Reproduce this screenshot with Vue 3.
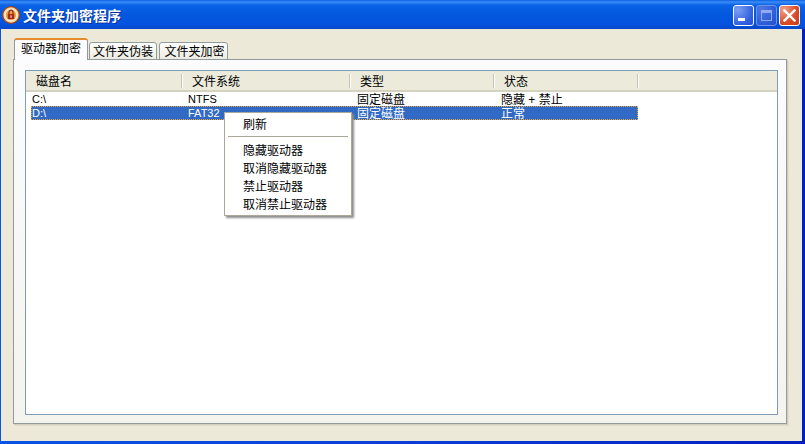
<script setup>
const columns = [
  { name: '磁盘名', width: 157 },
  { name: '文件系统', width: 168 },
  { name: '类型', width: 144 },
  { name: '状态', width: 144 },
]
const rows = [
  { cells: ['C:\\', 'NTFS', '固定磁盘', '隐藏 + 禁止'], selected: false },
  { cells: ['D:\\', 'FAT32', '固定磁盘', '正常'], selected: true },
]
const tabs = ['驱动器加密', '文件夹伪装', '文件夹加密']
const menuTop = ['刷新']
const menuBottom = ['隐藏驱动器', '取消隐藏驱动器', '禁止驱动器', '取消禁止驱动器']
// Rows begin 5px inside the list, so the first cell is narrower than its header.
const cellWidth = (i) => columns[i].width - (i === 0 ? 4 : 0)
</script>

<template>
  <div class="window">
    <header class="titlebar">
      <svg class="app-icon" width="18" height="18" viewBox="0 0 18 18">
        <circle cx="9" cy="9" r="8.3" fill="#f3d6a4" stroke="#a8420f" stroke-width="1.3" />
        <circle cx="9" cy="9" r="5.8" fill="#e9a04a" stroke="#fbf0d6" stroke-width="1.2" />
        <path d="M7 8V6.2a2 2 0 0 1 4 0V8" fill="none" stroke="#8e2412" stroke-width="1.2" />
        <rect x="5.8" y="8" width="6.4" height="5" fill="#a82a16" />
        <rect x="8.4" y="9.4" width="1.2" height="2.2" fill="#fbe8c8" />
      </svg>
      <span class="title">文件夹加密程序</span>
      <div class="controls">
        <button class="ctl ctl-min"><i class="min-glyph"></i></button>
        <button class="ctl ctl-max"><i class="max-glyph"></i></button>
        <button class="ctl ctl-close">
          <svg width="13" height="13" viewBox="0 0 13 13">
            <path d="M1.5 1.5 11.5 11.5M11.5 1.5 1.5 11.5" stroke="#fff" stroke-width="2.4" stroke-linecap="square" />
          </svg>
        </button>
      </div>
    </header>

    <main class="client">
      <nav class="tabs">
        <div
          v-for="(tab, i) in tabs"
          :key="tab"
          class="tab"
          :class="{ active: i === 0 }"
        >{{ tab }}</div>
      </nav>
      <section class="panel">
        <div class="list">
          <div class="list-head">
            <div
              v-for="col in columns"
              :key="col.name"
              class="head-cell"
              :style="{ width: col.width + 'px' }"
            >{{ col.name }}</div>
          </div>
          <div
            v-for="row in rows"
            :key="row.cells[0]"
            class="row"
            :class="{ selected: row.selected }"
          >
            <div
              v-for="(cell, i) in row.cells"
              :key="i"
              class="cell"
              :class="{ latin: i < 2 }"
              :style="{ width: cellWidth(i) + 'px' }"
            >{{ cell }}</div>
          </div>

          <div class="menu">
            <div v-for="item in menuTop" :key="item" class="menu-item">{{ item }}</div>
            <div class="menu-sep"></div>
            <div v-for="item in menuBottom" :key="item" class="menu-item">{{ item }}</div>
          </div>
        </div>
      </section>
    </main>
  </div>
</template>

<style>
html, body { margin: 0; padding: 0; overflow: hidden; }
</style>

<style scoped>
.window {
  width: 805px;
  height: 444px;
  box-sizing: border-box;
  display: flex;
  flex-direction: column;
  background: linear-gradient(90deg, #0a55e4 0, #0a3fd8 50%, #0020c0 100%);
  font-family: "Liberation Sans", "Noto Sans CJK SC", sans-serif;
  font-size: 12px;
  color: #000;
  overflow: hidden;
}
.titlebar {
  height: 29px;
  flex: none;
  display: flex;
  align-items: center;
  padding: 0 5px 0 2px;
  box-sizing: border-box;
  background: linear-gradient(180deg, #0a5fe0 0, #3c8cf6 2px, #0a63e6 5px, #0358de 14px, #0553e0 24px, #0a47c8 29px);
}
.app-icon { flex: none; margin-top: 1px; }
.title {
  margin-left: 3px;
  margin-top: 1px;
  color: #fff;
  font-size: 14px;
  font-weight: 700;
  font-family: "Noto Sans CJK SC", sans-serif;
  text-shadow: 1px 1px 0 #0a2f9c;
  line-height: 18px;
}
.controls {
  margin-left: auto;
  margin-top: 2px;
  display: flex;
  gap: 2px;
}
.ctl {
  width: 21px;
  height: 21px;
  padding: 0;
  box-sizing: border-box;
  border: 1px solid #fff;
  border-radius: 3px;
  position: relative;
  display: flex;
  align-items: center;
  justify-content: center;
}
.ctl-min { background: radial-gradient(circle at 20% 20%, #7da0f2, #2f5fe0 70%, #2350cf); }
.ctl-max {
  background: radial-gradient(circle at 20% 20%, #4e78e2, #2b5bd8 70%, #2850c8);
  border-color: #6f93e8;
}
.ctl-close { background: radial-gradient(circle at 20% 20%, #f0a088, #db4c24 60%, #c8391a); }
.min-glyph {
  position: absolute;
  left: 4px;
  bottom: 4px;
  width: 7px;
  height: 3px;
  background: #fff;
}
.max-glyph {
  width: 11px;
  height: 11px;
  box-sizing: border-box;
  border: 1px solid #8fabef;
  border-top-width: 3px;
}
.client {
  flex: 1;
  min-height: 0;
  margin: 0 3px 3px 1px;
  padding: 10px 15px 17px 12px;
  background: #ece9d8;
  display: flex;
  flex-direction: column;
  box-sizing: border-box;
}
.tabs {
  display: flex;
  align-items: flex-end;
  height: 21px;
  padding-left: 1px;
  gap: 2px;
  position: relative;
  z-index: 1;
  margin-bottom: -1px;
}
.tab {
  width: 68px;
  height: 18px;
  box-sizing: border-box;
  padding-top: 1px;
  text-align: center;
  line-height: 16px;
  background: linear-gradient(180deg, #fff, #ecebe2);
  border: 1px solid #919b9c;
  border-bottom: 1px solid #919b9c;
  border-radius: 3px 3px 0 0;
}
.tab:last-child {
  width: 69px;
  padding-left: 2px;
}
.tab.active {
  width: 74px;
  height: 22px;
  padding-top: 2px;
  margin-right: -1px;
  background: #fcfcfe;
  border-top: 2px solid #e68b2c;
  border-bottom: none;
  line-height: 15px;
  text-align: center;
}
.panel {
  flex: 1;
  min-height: 0;
  border: 1px solid #919b9c;
  background: linear-gradient(180deg, #fcfcfe, #f4f3ee);
  box-shadow: 1px 1px 0 #d2cfbc, 2px 2px 0 #e0ddca;
  padding: 10px 8px 8px 11px;
}
.list {
  height: 100%;
  box-sizing: border-box;
  border: 1px solid #7f9db9;
  background: #fff;
  position: relative;
}
.list-head {
  display: flex;
  height: 21px;
  box-sizing: border-box;
  background: #ebeadb;
  border-bottom: 2px solid #d6d2c2;
}
.head-cell {
  flex: none;
  box-sizing: border-box;
  padding-left: 9px;
  line-height: 22px;
  position: relative;
}
.head-cell:first-child { padding-left: 10px; }
.head-cell::after {
  content: "";
  position: absolute;
  right: 0;
  top: 3px;
  height: 14px;
  width: 2px;
  background: linear-gradient(90deg, #c7c5b2 50%, #fff 50%);
}
.row {
  display: flex;
  width: 607px;
  height: 14px;
  margin-left: 5px;
  box-sizing: border-box;
}
.row.selected {
  background: #316ac5;
  color: #fff;
  outline: 1px dotted #e8a33c;
  outline-offset: -1px;
}
.cell {
  flex: none;
  box-sizing: border-box;
  padding-left: 5px;
  line-height: 17px;
  white-space: nowrap;
}
.cell:first-child { padding-left: 1px; }
.cell:nth-child(2) { padding-left: 4px; }
.cell.latin { font-size: 11px; line-height: 15px; }
.menu {
  position: absolute;
  left: 198px;
  top: 41px;
  width: 128px;
  box-sizing: border-box;
  background: #fff;
  border: 1px solid #aca899;
  box-shadow: 2px 2px 2px #8d8d8d;
  padding: 2px 0 2px;
  color: #000;
}
.menu-item {
  height: 18px;
  line-height: 20px;
  padding-left: 18px;
  white-space: nowrap;
}
.menu-sep {
  height: 1px;
  background: #aca899;
  margin: 3px 3px 4px 3px;
}
</style>
